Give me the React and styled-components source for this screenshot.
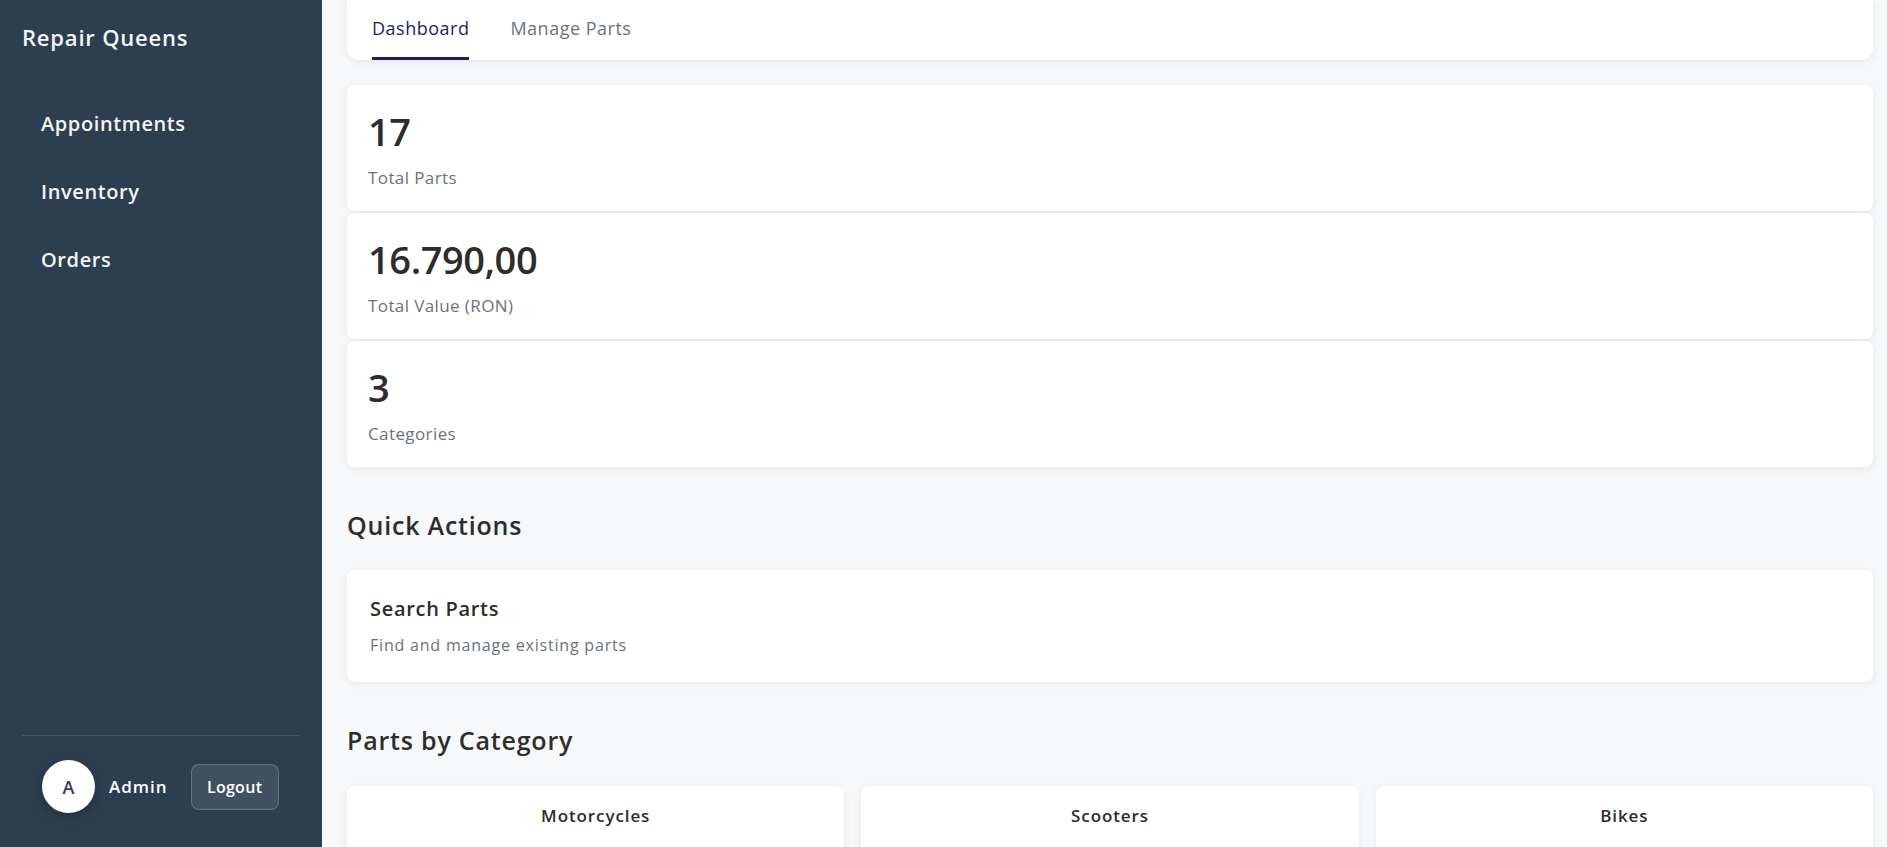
import React, { useState } from "react";
import styled, { createGlobalStyle } from "styled-components";

const GlobalStyle = createGlobalStyle`
  html, body {
    margin: 0;
    padding: 0;
    background: #f7f8fa;
    font-family: "Open Sans", "Noto Sans", sans-serif;
  }
  * { box-sizing: border-box; }
`;

const Shell = styled.div`
  display: flex;
  height: 100vh;
  overflow: hidden;
`;

const Sidebar = styled.aside`
  width: 322px;
  flex-shrink: 0;
  background: #2c3e50;
  color: #fff;
  display: flex;
  flex-direction: column;
  padding: 20px 22px 0 22px;
`;

const Brand = styled.div`
  font-size: 22px;
  font-weight: 600;
  letter-spacing: 0.8px;
  color: #f3f5f7;
  line-height: 34px;
  margin-bottom: 55px;
`;

const Nav = styled.nav`
  display: flex;
  flex-direction: column;
  gap: 38px;
  padding-left: 19px;
`;

const NavItem = styled.a`
  font-size: 20px;
  font-weight: 600;
  letter-spacing: 0.6px;
  color: #f3f5f7;
  line-height: 30px;
  cursor: pointer;
`;

const SideFooter = styled.div`
  margin-top: auto;
  border-top: 1px solid rgba(255, 255, 255, 0.12);
  height: 112px;
  display: flex;
  align-items: center;
  padding: 0 20px 10px 20px;
  gap: 14px;
`;

const Avatar = styled.div`
  width: 53px;
  height: 53px;
  border-radius: 50%;
  background: #fff;
  color: #2c3e50;
  display: flex;
  align-items: center;
  justify-content: center;
  font-weight: 600;
  font-size: 18px;
  box-shadow: 0 3px 8px rgba(0, 0, 0, 0.25);
`;

const UserName = styled.span`
  font-size: 17px;
  font-weight: 600;
  letter-spacing: 1px;
  color: #fff;
  margin-right: 9px;
`;

const LogoutButton = styled.button`
  height: 46px;
  width: 88px;
  border-radius: 8px;
  background: rgba(255, 255, 255, 0.1);
  border: 1px solid rgba(255, 255, 255, 0.2);
  color: #fff;
  font-family: inherit;
  font-size: 16px;
  font-weight: 600;
  letter-spacing: 0.3px;
  cursor: pointer;
`;

const Main = styled.main`
  flex: 1;
  padding: 0 14px 0 25px;
  display: flex;
  flex-direction: column;

  & > * {
    flex-shrink: 0;
  }
`;

const TabBar = styled.div`
  background: #fff;
  height: 60px;
  border-radius: 0 0 12px 12px;
  box-shadow: 0 2px 8px rgba(0, 0, 0, 0.07);
  display: flex;
  padding-left: 25px;
  gap: 41px;
`;

const Tab = styled.button`
  background: none;
  border: none;
  padding: 0 0 2px 0;
  font-family: inherit;
  font-size: 18px;
  letter-spacing: 0.5px;
  color: ${(p) => (p.$active ? "#1b1f5e" : "#6b7280")};
  border-bottom: 3px solid ${(p) => (p.$active ? "#1b1f5e" : "transparent")};
  cursor: pointer;
  display: flex;
  align-items: center;
`;

const Stats = styled.div`
  display: flex;
  flex-direction: column;
  gap: 2px;
  margin-top: 25px;
`;

const Card = styled.div`
  background: #fff;
  border-radius: 8px;
  box-shadow: 0 2px 8px rgba(0, 0, 0, 0.07);
`;

const StatCard = styled(Card)`
  height: 126px;
  padding: 22px 21px;
`;

const StatValue = styled.div`
  font-size: 38px;
  font-weight: 600;
  letter-spacing: -0.4px;
  color: #2d2d2d;
  line-height: 48px;
`;

const StatLabel = styled.div`
  font-size: 17px;
  letter-spacing: 0.4px;
  color: #6b7280;
  margin-top: 11px;
`;

const SectionTitle = styled.h2`
  font-size: 25px;
  font-weight: 600;
  letter-spacing: 0.8px;
  color: #2d2d2d;
  margin: 0;
  line-height: 32px;
  margin-top: ${(p) => p.$top}px;
  margin-bottom: ${(p) => p.$bottom}px;
`;

const ActionCard = styled(Card)`
  height: 112px;
  padding: 25px 23px;
  cursor: pointer;
`;

const ActionTitle = styled.div`
  font-size: 20px;
  font-weight: 600;
  letter-spacing: 0.7px;
  color: #2d2d2d;
  line-height: 28px;
`;

const ActionText = styled.div`
  font-size: 16px;
  letter-spacing: 0.8px;
  color: #6b7280;
  margin-top: 11px;
`;

const CategoryGrid = styled.div`
  display: grid;
  grid-template-columns: repeat(3, 1fr);
  gap: 17px;
`;

const CategoryCard = styled(Card)`
  height: 120px;
  padding-top: 18px;
  text-align: center;
  font-size: 17px;
  font-weight: 600;
  letter-spacing: 0.9px;
  color: #2d2d2d;
`;

const stats = [
  { value: "17", label: "Total Parts" },
  { value: "16.790,00", label: "Total Value (RON)" },
  { value: "3", label: "Categories" },
];

const categories = ["Motorcycles", "Scooters", "Bikes"];

export default function App() {
  const [tab, setTab] = useState("dashboard");

  return (
    <Shell>
      <GlobalStyle />
      <Sidebar>
        <Brand>Repair Queens</Brand>
        <Nav>
          <NavItem>Appointments</NavItem>
          <NavItem>Inventory</NavItem>
          <NavItem>Orders</NavItem>
        </Nav>
        <SideFooter>
          <Avatar>A</Avatar>
          <UserName>Admin</UserName>
          <LogoutButton>Logout</LogoutButton>
        </SideFooter>
      </Sidebar>

      <Main>
        <TabBar>
          <Tab $active={tab === "dashboard"} onClick={() => setTab("dashboard")}>
            Dashboard
          </Tab>
          <Tab $active={tab === "parts"} onClick={() => setTab("parts")}>
            Manage Parts
          </Tab>
        </TabBar>

        <Stats>
          {stats.map((s) => (
            <StatCard key={s.label}>
              <StatValue>{s.value}</StatValue>
              <StatLabel>{s.label}</StatLabel>
            </StatCard>
          ))}
        </Stats>

        <SectionTitle $top={42} $bottom={29}>Quick Actions</SectionTitle>
        <ActionCard>
          <ActionTitle>Search Parts</ActionTitle>
          <ActionText>Find and manage existing parts</ActionText>
        </ActionCard>

        <SectionTitle $top={42} $bottom={30}>Parts by Category</SectionTitle>
        <CategoryGrid>
          {categories.map((c) => (
            <CategoryCard key={c}>{c}</CategoryCard>
          ))}
        </CategoryGrid>
      </Main>
    </Shell>
  );
}
